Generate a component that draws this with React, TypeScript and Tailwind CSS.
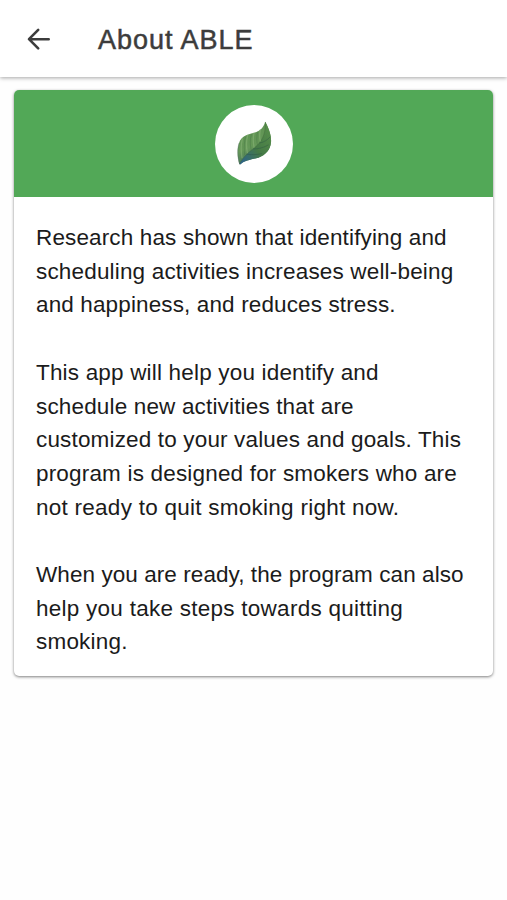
const paragraphs = [
  [
    { text: 'Research has shown that identifying and', tracking: 'tracking-[0.14px]' },
    { text: 'scheduling activities increases well-being', tracking: 'tracking-[0.17px]' },
    { text: 'and happiness, and reduces stress.', tracking: 'tracking-[0.13px]' },
  ],
  [
    { text: 'This app will help you identify and', tracking: 'tracking-[0.18px]' },
    { text: 'schedule new activities that are', tracking: 'tracking-[0.16px]' },
    { text: 'customized to your values and goals. This', tracking: 'tracking-[0.16px]' },
    { text: 'program is designed for smokers who are', tracking: 'tracking-[0.18px]' },
    { text: 'not ready to quit smoking right now.', tracking: 'tracking-[0.26px]' },
  ],
  [
    { text: 'When you are ready, the program can also', tracking: 'tracking-[0.07px]' },
    { text: 'help you take steps towards quitting', tracking: 'tracking-[0.26px]' },
    { text: 'smoking.', tracking: 'tracking-[0.2px]' },
  ],
];

function BackArrow() {
  return (
    <svg className="h-6 w-6" viewBox="0 0 24 24" fill="none" stroke="#3c3c3c" strokeWidth="2.6" strokeLinecap="round" strokeLinejoin="round">
      <path d="M12.2 2.9 3 12.2l9.2 9.2M3.4 12.2h19.3" />
    </svg>
  );
}

function Leaf() {
  return (
    <svg className="h-[78px] w-[78px]" viewBox="30 30 234 234">
      <defs>
        <linearGradient id="light" x1="0.2" y1="0" x2="0.5" y2="1">
          <stop offset="0" stopColor="#5c9150" />
          <stop offset="0.6" stopColor="#659858" />
          <stop offset="1" stopColor="#3f6b5a" />
        </linearGradient>
        <linearGradient id="dark" x1="1" y1="0" x2="0" y2="1">
          <stop offset="0" stopColor="#5a914b" />
          <stop offset="0.55" stopColor="#457a46" />
          <stop offset="1" stopColor="#2a6094" />
        </linearGradient>
      </defs>
      <path d="M181 80C189 96 200 118 198 142C196 165 182 180 160 188C140 194 118 196 107 208L103 208C98 190 95 165 102 145C108 122 130 117 148 113C165 108 175 98 181 80Z" fill="url(#light)" />
      <path d="M181 80C189 96 200 118 198 142C196 165 182 180 160 188C140 194 118 196 107 208L103 207C113 187 130 172 150 157C170 141 184 116 181 80Z" fill="url(#dark)" />
      <g fill="none" strokeLinecap="round">
        <path d="M104 206C113 188 130 172 150 157C170 141 183 117 181 82" stroke="#44703f" strokeWidth="2" opacity=".8" />
        <path d="M112 132C107 151 108 170 111 188M128 121C123 140 124 158 127 173M147 114C143 131 145 146 147 156M166 104C163 120 164 131 166 138" stroke="#8eb77c" strokeWidth="4" opacity=".5" />
        <path d="M121 127C116 148 118 166 119 180M139 118C134 136 136 151 138 163M158 110C154 127 155 139 157 148" stroke="#37643b" strokeWidth="2" opacity=".4" />
        <path d="M126 178C141 180 156 179 170 176M146 162C160 162 176 158 190 150M164 144C178 142 188 134 195 126" stroke="#294f42" strokeWidth="2.5" opacity=".45" />
        <path d="M102 145C96 165 98 190 104 207" stroke="#546b64" strokeWidth="2" opacity=".7" />
      </g>
    </svg>
  );
}

export default function App() {
  return (
    <div className="min-h-[900px] bg-[#fefefe] font-['Liberation_Sans',Arial,sans-serif]">
      <header className="flex h-[77px] items-center bg-white pl-[26px] shadow-[0_1px_4px_rgba(0,0,0,0.35)]">
        <BackArrow />
        <h1 className="ml-12 pt-[3px] text-[27px] leading-8 tracking-[1px] whitespace-nowrap text-[#3c3c3c] [-webkit-text-stroke:0.5px_#3c3c3c]">About ABLE</h1>
      </header>

      <main className="px-3.5 pt-[13px]">
        <section className="h-[586px] w-[479px] overflow-hidden rounded-[5px] bg-white shadow-[0_1px_3px_rgba(0,0,0,0.5)]">
          <div className="flex h-[107px] items-center justify-center bg-[#52a857]">
            <div className="rounded-full bg-white">
              <Leaf />
            </div>
          </div>
          <div className="flex flex-col gap-[33.7px] px-[22px] pt-6 text-[22.5px] leading-[33.7px] text-[#1b1b1b]">
            {paragraphs.map((lines) => (
              <p key={lines[0].text}>
                {lines.map(({ text, tracking }) => (
                  <span key={text} className={`block whitespace-nowrap ${tracking}`}>{text}</span>
                ))}
              </p>
            ))}
          </div>
        </section>
      </main>
    </div>
  );
}
